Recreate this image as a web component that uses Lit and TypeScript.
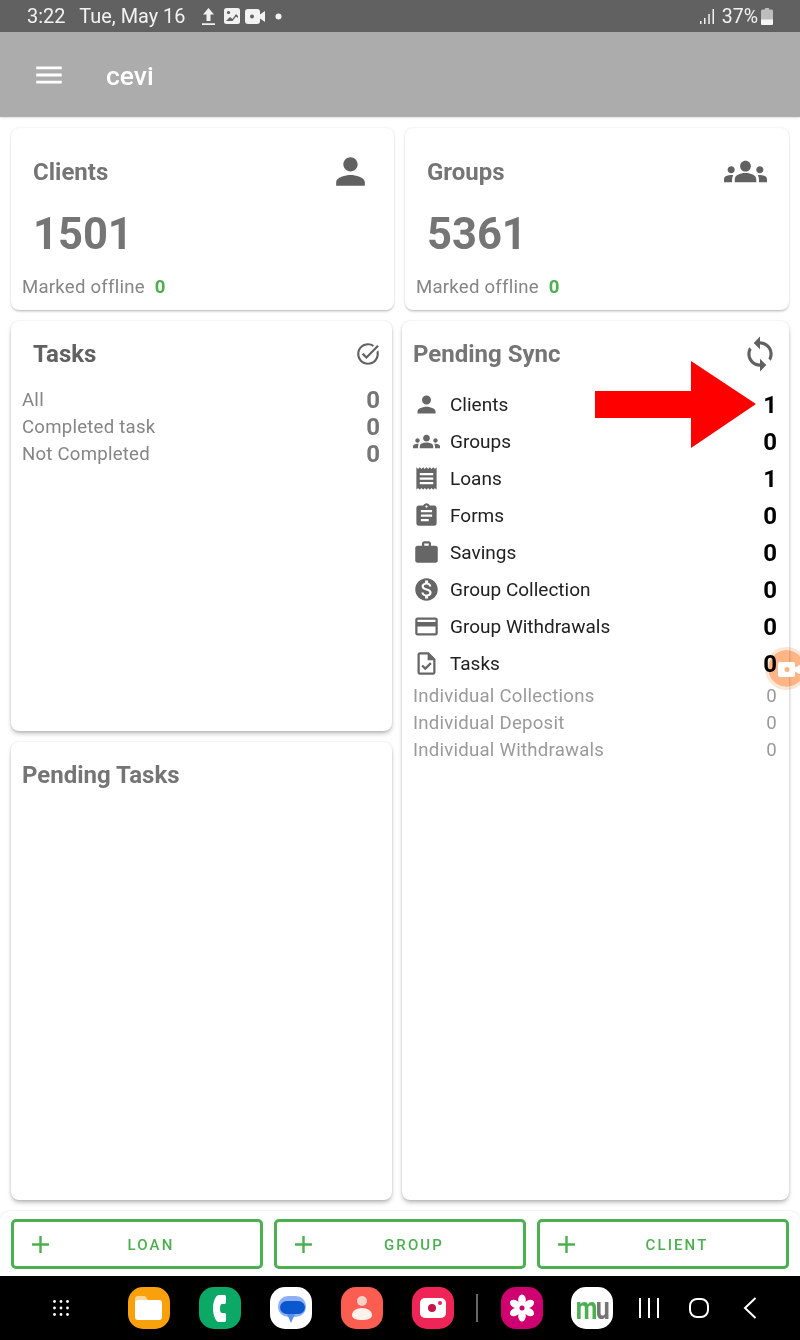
import { LitElement, html, css, svg } from "lit";
import { customElement } from "lit/decorators.js";

const P = {
  person: "M12 12c2.21 0 4-1.79 4-4s-1.79-4-4-4-4 1.79-4 4 1.79 4 4 4zm0 2c-2.67 0-8 1.34-8 4v2h16v-2c0-2.66-5.33-4-8-4z",
  groups: "M4 13c1.1 0 2-.9 2-2s-.9-2-2-2-2 .9-2 2 .9 2 2 2zm1.13 1.1c-.37-.06-.74-.1-1.13-.1-.99 0-1.93.21-2.78.58C.48 14.9 0 15.62 0 16.43V18h4.5v-1.61c0-.83.23-1.61.63-2.29zM20 13c1.1 0 2-.9 2-2s-.9-2-2-2-2 .9-2 2 .9 2 2 2zm4 3.43c0-.81-.48-1.53-1.22-1.85-.85-.37-1.79-.58-2.78-.58-.39 0-.76.04-1.13.1.4.68.63 1.46.63 2.29V18H24v-1.57zm-7.76-2.65c-1.17-.52-2.61-.9-4.24-.9-1.63 0-3.07.39-4.24.9C6.68 14.13 6 15.21 6 16.39V18h12v-1.61c0-1.18-.68-2.26-1.76-2.61zM12 12c1.66 0 3-1.34 3-3s-1.34-3-3-3-3 1.34-3 3 1.34 3 3 3z",
  receipt: "M18 17H6v-2h12v2zm0-4H6v-2h12v2zm0-4H6V7h12v2zM3 22l1.5-1.5L6 22l1.5-1.5L9 22l1.5-1.5L12 22l1.5-1.5L15 22l1.5-1.5L18 22l1.5-1.5L21 22V2l-1.5 1.5L18 2l-1.5 1.5L15 2l-1.5 1.5L12 2l-1.5 1.5L9 2 7.5 3.5 6 2 4.5 3.5 3 2v20z",
  assignment: "M19 3h-4.18C14.4 1.84 13.3 1 12 1c-1.3 0-2.4.84-2.82 2H5c-1.1 0-2 .9-2 2v14c0 1.1.9 2 2 2h14c1.1 0 2-.9 2-2V5c0-1.1-.9-2-2-2zm-7 0c.55 0 1 .45 1 1s-.45 1-1 1-1-.45-1-1 .45-1 1-1zm2 14H7v-2h7v2zm3-4H7v-2h10v2zm0-4H7V7h10v2z",
  work: "M20 6h-4V4c0-1.11-.89-2-2-2h-4c-1.11 0-2 .89-2 2v2H4c-1.11 0-1.99.89-1.99 2L2 19c0 1.11.89 2 2 2h16c1.11 0 2-.89 2-2V8c0-1.11-.89-2-2-2zm-6 0h-4V4h4v2z",
  money: "M12 2C6.48 2 2 6.48 2 12s4.48 10 10 10 10-4.48 10-10S17.52 2 12 2zm1.41 16.09V20h-2.67v-1.93c-1.71-.36-3.16-1.46-3.27-3.4h1.96c.1 1.05.82 1.87 2.65 1.87 1.96 0 2.4-.98 2.4-1.59 0-.83-.44-1.61-2.67-2.14-2.48-.6-4.18-1.62-4.18-3.67 0-1.72 1.39-2.84 3.11-3.21V4h2.67v1.95c1.86.45 2.79 1.86 2.85 3.39H14.3c-.05-1.11-.64-1.87-2.22-1.87-1.5 0-2.4.68-2.4 1.64 0 .84.65 1.39 2.67 1.91s4.18 1.39 4.18 3.91c-.01 1.83-1.38 2.83-3.12 3.16z",
  card: "M20 4H4c-1.11 0-1.99.89-1.99 2L2 18c0 1.11.89 2 2 2h16c1.11 0 2-.89 2-2V6c0-1.11-.89-2-2-2zm0 14H4v-6h16v6zm0-10H4V6h16v2z",
  task: "M14 2H6c-1.1 0-2 .9-2 2v16c0 1.1.89 2 1.99 2H18c1.1 0 2-.9 2-2V8l-6-6zm4 18H6V4h7v5h5v11zM8.82 13.05 7.4 14.46 10.94 18l5.66-5.66-1.41-1.41-4.24 4.24z",
  sync: "M12 4V1L8 5l4 4V6c3.31 0 6 2.69 6 6 0 1.01-.25 1.97-.7 2.8l1.46 1.46C19.54 15.03 20 13.57 20 12c0-4.42-3.58-8-8-8zm0 14c-3.31 0-6-2.69-6-6 0-1.01.25-1.97.7-2.8L5.24 7.74C4.46 8.97 4 10.43 4 12c0 4.42 3.58 8 8 8v3l4-4-4-4v3z",
  taskAlt: "M22 5.18L10.59 16.6l-4.24-4.24 1.41-1.41 2.83 2.83 10-10L22 5.18zm-2.21 5.04c.13.57.21 1.17.21 1.78 0 4.42-3.58 8-8 8s-8-3.58-8-8 3.58-8 8-8c1.58 0 3.04.46 4.28 1.25l1.44-1.44C16.1 2.67 14.13 2 12 2 6.48 2 2 6.48 2 12s4.48 10 10 10 10-4.48 10-10c0-1.19-.22-2.33-.6-3.39l-1.61 1.61z",
  menu: "M3 18h18v-2H3v2zm0-5h18v-2H3v2zm0-7v2h18V6H3z",
  add: "M19 13h-6v6h-2v-6H5v-2h6V5h2v6h6v2z",
};

const icon = (d: string, cls: string) =>
  html`<svg class=${cls} viewBox="0 0 24 24" fill="currentColor"><path d=${d}></path></svg>`;

const syncRows = [
  ["Clients", P.person, 1], ["Groups", P.groups, 0], ["Loans", P.receipt, 1], ["Forms", P.assignment, 0],
  ["Savings", P.work, 0], ["Group Collection", P.money, 0], ["Group Withdrawals", P.card, 0], ["Tasks", P.task, 0],
] as const;

const squircle = (fill: string, inner: unknown) => html`<svg class="app" viewBox="0 0 42 42">
  <rect width="42" height="42" rx="15" fill=${fill}></rect>${inner}</svg>`;

@customElement("app-root")
export class AppRoot extends LitElement {
  static styles = css`
    :host { display: flex; flex-direction: column; position: relative; width: 800px; height: 1340px; overflow: hidden;
      background: #fff; font-family: Roboto, "Liberation Sans", sans-serif; will-change: transform; }
    .status { height: 32px; flex: none; background: #616161; color: #f2f2f2; display: flex; align-items: center;
      padding: 0 27px; font-size: 19.9px; }
    .date { margin-left: 14px; }
    .st-left { display: flex; align-items: center; margin-left: 17px; }
    .st-left svg { display: block; }
    .gap-a { margin-left: 9px; }
    .gap-b { margin-left: 5px; }
    .gap-c { margin-left: 10px; }
    .pct { margin-left: 8px; font-size: 19.5px; }
    .batt { margin-left: 3px; }
    .grow { flex: 1; }
    .bar { height: 85px; flex: none; background: #acacac; display: flex; align-items: center; color: #fff;
      box-shadow: 0 1px 2px rgba(0,0,0,.12); position: relative; padding-left: 32px; }
    .menu { width: 34px; height: 34px; display: block; }
    .brand { font-size: 26.5px; font-weight: 500; margin-left: 40px; padding-top: 2px; }
    .main { flex: 1; min-height: 0; display: flex; flex-direction: column; gap: 11px; padding: 11px 11px 11px; }
    .top { display: grid; grid-template-columns: 383px 384px; gap: 11px; height: 182px; flex: none; }
    .low { flex: 1; min-height: 0; display: grid; grid-template-columns: 381px 1fr; gap: 10px; }
    .leftcol { display: flex; flex-direction: column; gap: 11px; min-height: 0; }
    .card { background: #fff; border-radius: 8px; box-sizing: border-box;
      box-shadow: 0 2px 3px -1px rgba(0,0,0,.28), 0 0 2px rgba(0,0,0,.14); }
    .deep { box-shadow: 0 3px 5px -1px rgba(0,0,0,.32), 0 0 2px rgba(0,0,0,.12); }
    .stat { padding: 0 11px; display: flex; flex-direction: column; }
    .head { display: flex; align-items: center; justify-content: space-between; }
    .stat .head { height: 87px; padding: 0 0 0 11px; }
    .title { font-size: 24px; font-weight: 700; color: #757575; }
    .dark { color: #616161; }
    .i43 { width: 43px; height: 43px; color: #616161; display: block; margin-right: 11px; }
    .big { font-size: 43.5px; font-weight: 700; color: #757575; line-height: 38px; margin: 1px 0 -1px 11px; }
    .off { font-size: 18.6px; letter-spacing: .24px; color: #858585; margin-top: 22px; line-height: 24px; }
    .off b { color: #4caf50; font-weight: 700; margin-left: 5px; letter-spacing: 0; }
    .tasks { height: 410px; flex: none; padding: 0 12px 0 11px; }
    .tasks .head { height: 65px; padding-left: 11px; }
    .i26 { width: 26px; height: 26px; color: #616161; display: block; margin-right: -1px; }
    .trow { display: flex; justify-content: space-between; align-items: center; height: 27px; font-size: 18.6px;
      letter-spacing: .24px; color: #858585; }
    .trow b { font-size: 24px; font-weight: 700; color: #757575; letter-spacing: 0; }
    .ptasks { flex: 1; padding: 0 11px; }
    .ptasks .title { display: block; margin-top: 19px; line-height: 28px; }
    .sync { padding: 0 12px 0 11px; }
    .sync .head { height: 65px; }
    .i38 { width: 38px; height: 38px; color: #616161; display: block; margin-right: -2px; }
    .srow { height: 37px; display: flex; align-items: center; font-size: 19px; color: #212121; }
    .srow svg { width: 27px; height: 27px; color: #666; flex: none; margin-right: 10px; }
    .srow span { flex: 1; }
    .srow b { font-size: 24px; font-weight: 700; color: #000; }
    .irow { height: 27px; display: flex; align-items: center; justify-content: space-between; font-size: 18.6px;
      letter-spacing: .24px; color: #9a9a9a; }
    .actions { height: 65px; flex: none; box-sizing: border-box; padding: 8px 11px 7px; display: grid;
      grid-template-columns: repeat(3, 1fr); gap: 11px; border-radius: 10px 10px 0 0; box-shadow: 0 0 2px rgba(0,0,0,.14); }
    .btn { border: 3px solid #4caf50; border-radius: 5px; box-sizing: border-box; display: flex; align-items: center;
      padding: 0 13px 0 12px; color: #4caf50; font-size: 15px; font-weight: 500; letter-spacing: 2.1px; }
    .btn svg { width: 29px; height: 29px; flex: none; }
    .btn span { flex: 1; text-align: center; padding-top: 1px; }
    .nav { height: 64px; flex: none; background: #000; display: flex; align-items: center; }
    .app { width: 42px; height: 42px; display: block; flex: none; }
    .dots { margin-left: 53px; margin-right: 59px; width: 16px; height: 16px; display: block; }
    .dock { display: flex; gap: 29px; align-items: center; }
    .sep { width: 2px; height: 28px; background: #666; margin: 0 23px 0 22px; flex: none; }
    .mu { width: 42px; height: 42px; border-radius: 15px; background: #fff; flex: none; margin-left: 28px;
      display: flex; align-items: center; justify-content: center; }
    .mu span { display: block; font-weight: 700; font-size: 25px; line-height: 25px; letter-spacing: -1.5px;
      transform: scaleY(1.25); }
    .mu i { font-style: normal; color: #4caf50; }
    .mu u { text-decoration: none; color: #757575; }
    .navbtn { display: block; flex: none; }
    .nav1 { margin-left: 25px; }
    .nav2 { margin-left: 28px; }
    .nav3 { margin-left: 33px; }
    .arrow { position: absolute; left: 595px; top: 361px; width: 161px; height: 87px; display: block; }
    .bubble { position: absolute; left: 765px; top: 647px; width: 43px; height: 43px; border-radius: 50%; box-sizing: border-box;
      background: #ffb586; border: 3px solid #fde6d6; background-clip: padding-box; mix-blend-mode: multiply; }
    .cam { position: absolute; left: 778px; top: 662px; width: 24px; height: 15px; display: block; }
  `;

  render() {
    return html`
      <div class="status">
        <span>3:22</span><span class="date">Tue, May 16</span>
        <div class="st-left">
          <svg width="13" height="17" viewBox="0 0 13 17" fill="#f2f2f2"><path d="M6.500 0 12 6.500H8.500V13h-4V6.500H1zM0 15.300h13V17H0z"></path></svg>
          <svg class="gap-a" width="16" height="16" viewBox="0 0 16 16"><rect width="16" height="16" rx="2.5" fill="#f2f2f2"></rect><circle cx="4.500" cy="4.500" r="1.600" fill="#616161"></circle><path d="M2 13l4-4 2.500 2L12 6l2 2v2l-2-1.500L8.500 13z" fill="#616161"></path></svg>
          <svg class="gap-b" width="20" height="15" viewBox="0 0 20 15" fill="#f2f2f2"><rect width="15" height="15" rx="3"></rect><path d="M15 5.500l5-3.500v11l-5-3.500z"></path><circle cx="7" cy="7.500" r="2" fill="#616161"></circle></svg>
          <svg class="gap-c" width="7" height="7" viewBox="0 0 7 7" fill="#f2f2f2"><circle cx="3.500" cy="3.500" r="3"></circle></svg>
        </div>
        <div class="grow"></div>
        <svg width="14" height="15" viewBox="0 0 14 15" fill="#f2f2f2"><rect x="0" y="12" width="1.500" height="3"></rect><rect x="4" y="9" width="1.500" height="6"></rect><rect x="8.300" y="5" width="1.500" height="10"></rect><rect x="12.500" y="0" width="1.500" height="15"></rect></svg>
        <span class="pct">37%</span>
        <svg class="batt" width="12" height="17" viewBox="0 0 12 17"><path d="M4 0h4v1.500h2.500A1.500 1.500 0 0 1 12 3v12.500A1.500 1.500 0 0 1 10.500 17h-9A1.500 1.500 0 0 1 0 15.500V3a1.500 1.500 0 0 1 1.500-1.500H4z" fill="#bdbdbd"></path><path d="M0 11.500h12v4a1.500 1.500 0 0 1-1.500 1.500h-9A1.500 1.500 0 0 1 0 15.500z" fill="#f6f6f6"></path></svg>
      </div>
      <div class="bar">${icon(P.menu, "menu")}<span class="brand">cevi</span></div>

      <div class="main">
        <div class="top">
          <div class="card stat">
            <div class="head"><span class="title">Clients</span>${icon(P.person, "i43")}</div>
            <div class="big">1501</div>
            <div class="off">Marked offline <b>0</b></div>
          </div>
          <div class="card stat">
            <div class="head"><span class="title">Groups</span>${icon(P.groups, "i43")}</div>
            <div class="big">5361</div>
            <div class="off">Marked offline <b>0</b></div>
          </div>
        </div>
        <div class="low">
          <div class="leftcol">
            <div class="card deep tasks">
              <div class="head"><span class="title dark">Tasks</span>${icon(P.taskAlt, "i26")}</div>
              <div class="trow"><span>All</span><b>0</b></div>
              <div class="trow"><span>Completed task</span><b>0</b></div>
              <div class="trow"><span>Not Completed</span><b>0</b></div>
            </div>
            <div class="card deep ptasks"><span class="title">Pending Tasks</span></div>
          </div>
          <div class="card deep sync">
            <div class="head"><span class="title">Pending Sync</span>${icon(P.sync, "i38")}</div>
            ${syncRows.map(([l, d, n]) => html`<div class="srow">${icon(d, "")}<span>${l}</span><b>${n}</b></div>`)}
            ${["Individual Collections", "Individual Deposit", "Individual Withdrawals"].map(
              (l) => html`<div class="irow"><span>${l}</span><span>0</span></div>`)}
          </div>
        </div>
      </div>

      <div class="actions">
        ${["LOAN", "GROUP", "CLIENT"].map((l) => html`<div class="btn">${icon(P.add, "")}<span>${l}</span></div>`)}
      </div>

      <div class="nav">
        <svg class="dots" viewBox="0 0 16 16" fill="#fff">
          ${[1.5, 8, 14.5].flatMap((y) => [1.5, 8, 14.5].map((x) => svg`<circle cx=${x} cy=${y} r="1.4"></circle>`))}
        </svg>
        <div class="dock">
          ${squircle("#f9a10d", svg`<path d="M7 12a3 3 0 0 1 3-3h7l3 4h-5v8H7z" fill="#fcd79a"></path><path d="M7 16a3 3 0 0 1 3-3h21a3 3 0 0 1 3 3v14a3 3 0 0 1-3 3H10a3 3 0 0 1-3-3z" fill="#fff"></path>`)}
          ${squircle("#0ca866", svg`<path d="M20 8h5c1.500 0 2 .5 2 2v5c0 1.500-.5 2-2 2h-2c-1 0-2 1-2 4.500s1 4.500 2 4.500h2c1.500 0 2 .5 2 2v5c0 1.500-.5 2-2 2h-5c-3 0-6-6-6-13.500S17 8 20 8z" fill="#fff"></path>`)}
          ${squircle("#fff", svg`<rect x="8" y="9" width="28" height="21" rx="10" fill="#8fb0f5"></rect><path d="M17 27l4 9 4-9z" fill="#5a8ff0"></path><rect x="10" y="14" width="25" height="13" rx="6.500" fill="#0b57d0"></rect>`)}
          ${squircle("#fb5e50", svg`<circle cx="21" cy="14" r="5" fill="#fbd0c8"></circle><path d="M21 21c-7 0-10 4-10 7 0 4 5 5 10 5s10-1 10-5c0-3-3-7-10-7z" fill="#fff2ea"></path>`)}
          ${squircle("#ef2558", svg`<rect x="8" y="11" width="26" height="20" rx="5" fill="#fff"></rect><circle cx="20" cy="21" r="4" fill="#c2174a"></circle><circle cx="28" cy="16" r="2" fill="#ef2558"></circle>`)}
        </div>
        <div class="sep"></div>
        ${squircle("#cf0070", svg`${[0, 60, 120, 180, 240, 300].map((a) => svg`<ellipse cx="21" cy="13" rx="3.800" ry="5.500" fill="#fff" transform="rotate(${a} 21 21)"></ellipse>`)}<circle cx="21" cy="21" r="4" fill="#fff"></circle><circle cx="21" cy="21" r="2.500" fill="#cf0070"></circle>`)}
        <div class="mu"><span><i>m</i><u>u</u></span></div>
        <svg class="navbtn nav1" width="22" height="22" viewBox="0 0 22 22" stroke="#fff" stroke-width="2" fill="none"><path d="M2 1v20M11 1v20M20 1v20"></path></svg>
        <svg class="navbtn nav2" width="22" height="22" viewBox="0 0 22 22" stroke="#fff" stroke-width="2" fill="none"><rect x="2" y="2" width="18" height="18" rx="7"></rect></svg>
        <svg class="navbtn nav3" width="14" height="22" viewBox="0 0 14 22" stroke="#fff" stroke-width="2" fill="none"><path d="M12.500 1 2 11l10.500 10"></path></svg>
      </div>

      <svg class="arrow" viewBox="0 0 161 87"><path d="M0 30H96V0L161 43 96 87V57H0z" fill="#f00"></path></svg>
      <div class="bubble"></div>
      <svg class="cam" viewBox="0 0 24 15" fill="#fff"><rect width="17" height="15" rx="2"></rect><path d="M17 5.500l7-4v12l-7-4z"></path><circle cx="9" cy="7.500" r="2.500" fill="#ffb27e"></circle></svg>
    `;
  }
}
